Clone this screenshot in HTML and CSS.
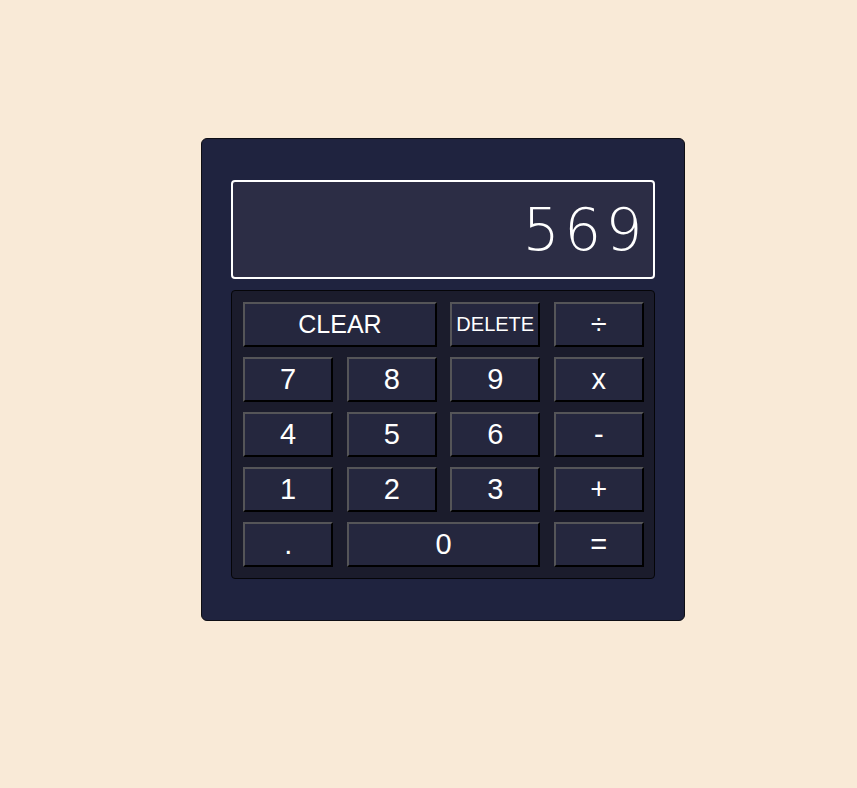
FILE: index.html
```html
<!DOCTYPE html>
<html>
<head>
<meta charset="utf-8">
<link rel="stylesheet" href="styles.css">
</head>
<body>
<div class="calculator">
  <div class="display">569</div>
  <div class="keypad">
    <button class="key key-wide key-clear">CLEAR</button>
    <button class="key key-small">DELETE</button>
    <button class="key">÷</button>
    <button class="key">7</button>
    <button class="key">8</button>
    <button class="key">9</button>
    <button class="key">x</button>
    <button class="key">4</button>
    <button class="key">5</button>
    <button class="key">6</button>
    <button class="key">-</button>
    <button class="key">1</button>
    <button class="key">2</button>
    <button class="key">3</button>
    <button class="key">+</button>
    <button class="key">.</button>
    <button class="key key-wide">0</button>
    <button class="key">=</button>
  </div>
</div>
</body>
</html>
```
FILE: styles.css
```css
html, body {
  margin: 0;
  padding: 0;
}
body {
  background: #f9ead7;
  min-height: 788px;
  padding-top: 138px;
  padding-left: 201px;
  box-sizing: border-box;
  font-family: "Liberation Sans", Arial, sans-serif;
}
.calculator {
  width: 484px;
  height: 483px;
  box-sizing: border-box;
  background: #1f233f;
  border: 1px solid #0e0e14;
  border-radius: 6px;
  padding: 41px 29px;
  display: flex;
  flex-direction: column;
  gap: 11px;
}
.display {
  height: 99px;
  box-sizing: border-box;
  border: 2px solid #ffffff;
  border-radius: 4px;
  background: #2c2d45;
  color: #ffffff;
  font-family: "DejaVu Sans", sans-serif;
  font-weight: 200;
  font-size: 58px;
  letter-spacing: 4.5px;
  display: flex;
  align-items: center;
  justify-content: flex-end;
  padding-right: 6px;
}
.keypad {
  height: 289px;
  box-sizing: border-box;
  background: #1b1c2c;
  border: 1px solid #050508;
  border-radius: 4px;
  padding: 11px 10px 11px 11px;
  display: grid;
  grid-template-columns: repeat(4, 1fr);
  grid-auto-rows: 45px;
  column-gap: 13.2px;
  row-gap: 10px;
}
.key {
  margin: 0;
  padding: 0;
  background: #25273e;
  color: #ffffff;
  border: 2px solid;
  border-color: #555558 #000000 #000000 #555558;
  font-family: "Liberation Sans", Arial, sans-serif;
  font-size: 29px;
}
.key-wide {
  grid-column: span 2;
}
.key-clear {
  font-size: 25px;
}
.key-small {
  font-size: 20px;
}
```
